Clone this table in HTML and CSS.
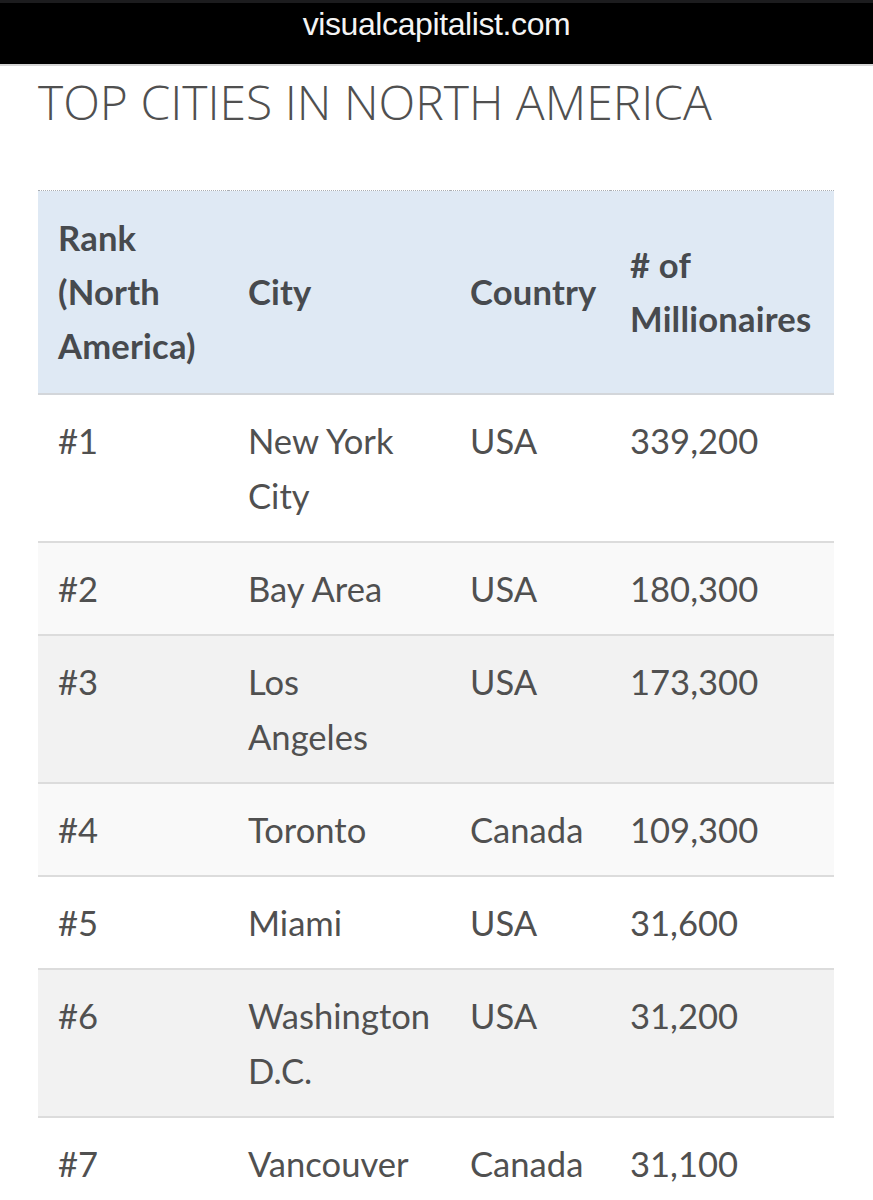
FILE: index.html
```html
<!DOCTYPE html>
<html lang="en">
<head>
<meta charset="utf-8">
<title>Top Cities in North America</title>
<link rel="stylesheet" href="styles.css">
</head>
<body>
<header class="topbar"><span class="domain">visualcapitalist.com</span></header>
<main class="page">
  <h1 class="title">TOP CITIES IN NORTH AMERICA</h1>
  <table class="cities">
    <colgroup>
      <col class="c-rank"><col class="c-city"><col class="c-country"><col class="c-count">
    </colgroup>
    <thead>
      <tr>
        <th>Rank (North America)</th>
        <th>City</th>
        <th>Country</th>
        <th># of Millionaires</th>
      </tr>
    </thead>
    <tbody>
      <tr class="row-white"><td>#1</td><td class="city">New York City</td><td>USA</td><td>339,200</td></tr>
      <tr class="row-light"><td>#2</td><td class="city">Bay Area</td><td>USA</td><td>180,300</td></tr>
      <tr class="row-grey"><td>#3</td><td class="city">Los Angeles</td><td>USA</td><td>173,300</td></tr>
      <tr class="row-light"><td>#4</td><td class="city">Toronto</td><td>Canada</td><td>109,300</td></tr>
      <tr class="row-white"><td>#5</td><td class="city">Miami</td><td>USA</td><td>31,600</td></tr>
      <tr class="row-grey"><td>#6</td><td class="city">Washington D.C.</td><td>USA</td><td>31,200</td></tr>
      <tr class="row-white"><td>#7</td><td class="city">Vancouver</td><td>Canada</td><td>31,100</td></tr>
    </tbody>
  </table>
</main>
</body>
</html>
```

FILE: styles.css
```css
* { box-sizing: border-box; }
html, body { margin: 0; padding: 0; background: #fff; }
body { font-family: "Lato", "Open Sans", sans-serif; color: #555; }

.topbar {
  height: 66px;
  background: #000;
  border-top: 3px solid #1c1c1e;
  border-bottom: 2px solid #d6d6d6;
  text-align: center;
  padding-top: 4px;
}
.domain {
  font-family: "Liberation Sans", Arial, sans-serif;
  font-size: 32px;
  line-height: 34px;
  color: #f4f4f4;
  letter-spacing: -0.4px;
}

.page { padding: 0 39px 0 38px; }

.title {
  margin: 4px 0 56px 0;
  font-family: "Open Sans", sans-serif;
  font-weight: 300;
  font-size: 48px;
  line-height: 64px;
  color: #505050;
  letter-spacing: 0;
}

.cities {
  width: 100%;
  border-collapse: collapse;
  table-layout: fixed;
  font-size: 34.6px;
  line-height: 55px;
}
.c-rank { width: 190px; }
.c-city { width: 222px; }
.c-country { width: 160px; }
.c-count { width: 224px; }

.cities th {
  background: #dfe9f4;
  border-top: 1px dotted #a9adb2;
  border-bottom: 2px solid #d3d6da;
  text-align: left;
  vertical-align: middle;
  font-weight: 700;
  font-size: 34.6px;
  line-height: 54px;
  color: #474a4e;
  padding: 20px 10px 20px 20px;
  letter-spacing: 0.2px;
}
.cities td {
  vertical-align: top;
  padding: 18px 12px 18px 20px;
  border-bottom: 2px solid #dcdcdc;
  color: #505050;
}
.cities td.city { padding-right: 34px; }
.row-white td { background: #ffffff; }
.row-light td { background: #f9f9f9; }
.row-grey td { background: #f2f2f2; }
```
